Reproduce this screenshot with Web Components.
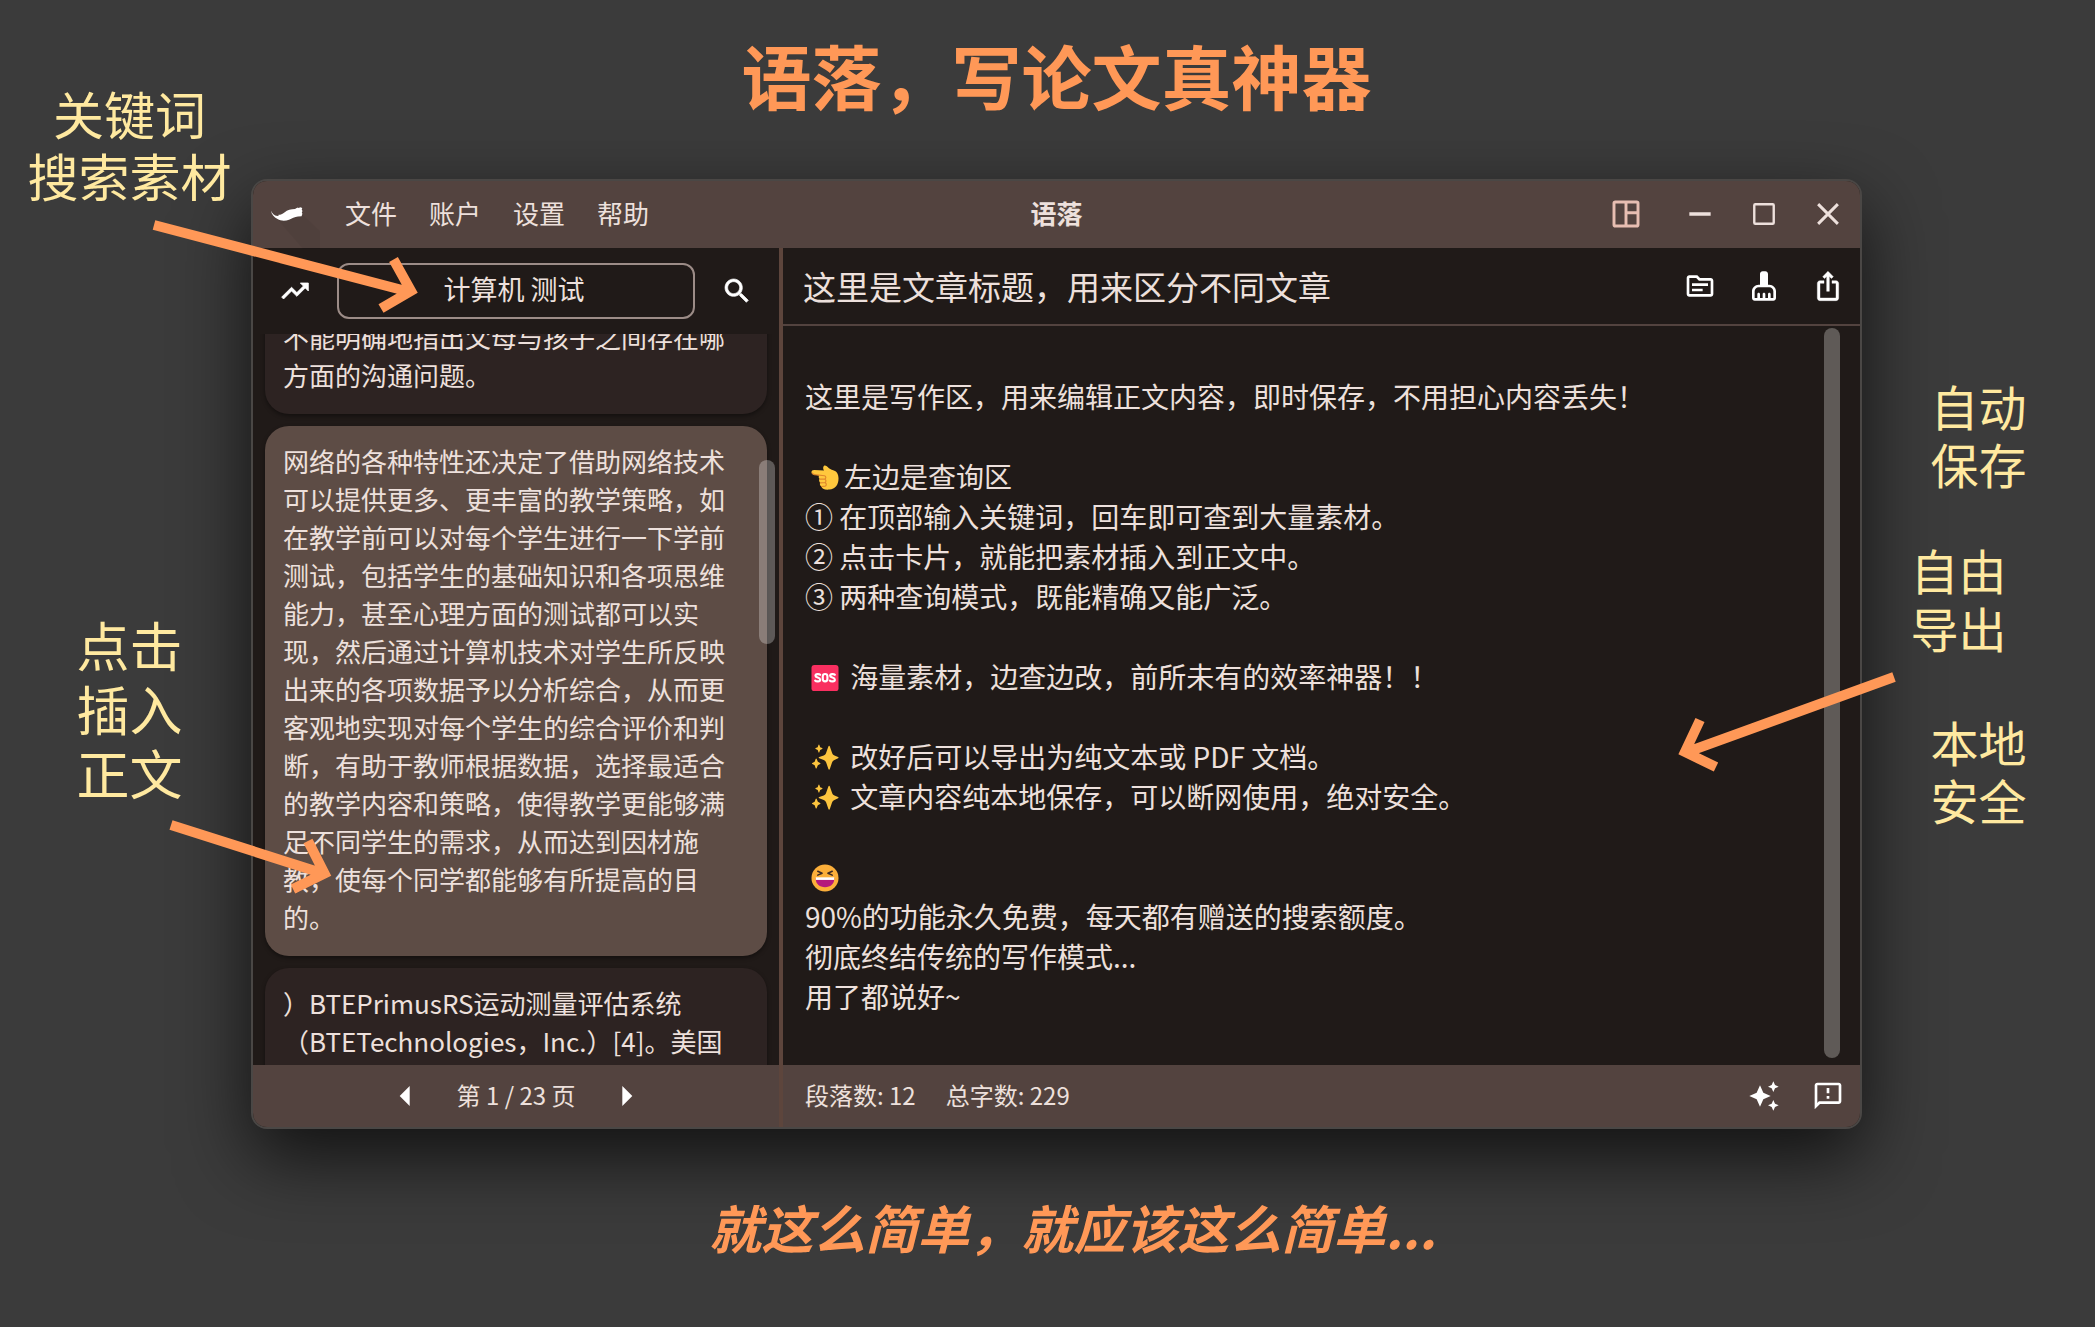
<!DOCTYPE html>
<html lang="zh-CN">
<head>
<meta charset="utf-8">
<title>语落，写论文真神器</title>
<style>
  html, body { margin: 0; }
  body {
    background: #3b3b3b;
    font-family: "Noto Sans CJK SC", sans-serif;
    --bar: #53433f;
    --surface: #201a18;
    --card: #2d2322;
    --card-active: #5d4c45;
    --divider: #5d453c;
    --text: #ede0dc;
    --accent: #ff9857;
    --note: #ffe9a0;
  }
</style>
</head>
<body>
<promo-poster></promo-poster>

<script>
const ICONS = {
  trend: '<path stroke="currentColor" stroke-width=".6" d="M16 6l2.29 2.29-4.88 4.88-4-4L2 16.59 3.41 18l6-6 4 4 6.3-6.29L22 12V6z"/>',
  search: '<path stroke="currentColor" stroke-width=".5" d="M15.5 14h-.79l-.28-.27C15.41 12.59 16 11.11 16 9.5 16 5.91 13.09 3 9.5 3S3 5.91 3 9.5 5.91 16 9.5 16c1.61 0 3.09-.59 4.23-1.57l.27.28v.79l5 4.99L20.49 19l-4.99-5zm-6 0C7.01 14 5 11.99 5 9.5S7.01 5 9.5 5 14 7.01 14 9.5 11.99 14 9.5 14z"/>',
  topic: '<path d="M20 6h-8l-2-2H4c-1.1 0-1.99.9-1.99 2L2 18c0 1.1.9 2 2 2h16c1.1 0 2-.9 2-2V8c0-1.1-.9-2-2-2zm0 12H4V6h5.17l2 2H20v10zm-2-6H6v-2h12v2zm-4 4H6v-2h8v2z"/>',
  clean: '<path d="M16 11h-1V3c0-1.1-.9-2-2-2h-2c-1.1 0-2 .9-2 2v8H8c-2.76 0-5 2.24-5 5v5c0 1.1.9 2 2 2h14c1.1 0 2-.9 2-2v-5c0-2.76-2.24-5-5-5zm3 10h-2v-3c0-.55-.45-1-1-1s-1 .45-1 1v3h-2v-3c0-.55-.45-1-1-1s-1 .45-1 1v3H9v-3c0-.55-.45-1-1-1s-1 .45-1 1v3H5v-5c0-1.65 1.35-3 3-3h8c1.65 0 3 1.35 3 3v5z"/>',
  share: '<path stroke="currentColor" stroke-width=".3" d="M16 5l-1.42 1.42-1.59-1.59V16h-1.98V4.83L9.42 6.42 8 5l4-4 4 4zm4 5v11c0 1.1-.9 2-2 2H6c-1.11 0-2-.9-2-2V10c0-1.11.89-2 2-2h3v2H6v11h12V10h-3V8h3c1.1 0 2 .89 2 2z"/>',
  sparkle: '<path d="M19 9l1.25-2.75L23 5l-2.75-1.25L19 1l-1.25 2.75L15 5l2.75 1.25L19 9zm-7.5.5L9 4 6.5 9.5 1 12l5.5 2.5L9 20l2.5-5.5L17 12l-5.5-2.5zM19 15l-1.25 2.75L15 19l2.75 1.25L19 23l1.25-2.75L23 19l-2.75-1.25L19 15z"/>',
  feedback: '<path d="M20 2H4c-1.1 0-1.99.9-1.99 2L2 22l4-4h14c1.1 0 2-.9 2-2V4c0-1.1-.9-2-2-2zm0 14H5.17L4 17.17V4h16v12zM11 12h2v2h-2zM11 6h2v4h-2z"/>',
  prev: '<path d="M15.5 4.5v15L8 12z"/>',
  next: '<path d="M8.5 4.5v15L16 12z"/>',
  layout: '<path fill="none" stroke="currentColor" stroke-width="2.2" d="M4 3h16a1 1 0 0 1 1 1v16a1 1 0 0 1-1 1H4a1 1 0 0 1-1-1V4a1 1 0 0 1 1-1zM12 3v18M12 11h9"/>',
  min: '<path d="M4 10.700h16v2.600H4z"/>',
  max: '<rect x="4.700" y="4.700" width="14.600" height="14.600" rx=".8" fill="none" stroke="currentColor" stroke-width="1.800"/>',
  close: '<path fill="none" stroke="currentColor" stroke-width="2.200" d="M4.600 4.600l14.800 14.800M19.400 4.600L4.600 19.400"/>'
};

const EMOJI = {
  point: '<path fill="#ffc83d" d="M0 8.500C0 6.800 1.200 6 3 6.100l10 .6c-1-1.500-1.300-3.500-.2-4.700 1.200-1.200 2.800-.2 4 1.200 1.700 2 3.500 2.700 5.700 3.200 3.600.9 5.500 4 5.500 8.600 0 6.500-3.400 11-9.500 11.500-5 .4-8-.8-8.200-3.200-1.600-.8-2-2.600-1.300-3.900-1.200-1-1.500-2.700-.6-4-.9-.9-1.200-2.300-.6-3.600L2.600 11C1 10.700 0 9.800 0 8.500z"/><path fill="none" stroke="#e0872c" stroke-width="1.200" stroke-linecap="round" d="M.700 9.400c.5 1 1.200 1.300 2.400 1.600l10.400 1.200c1.800.5 1.800 3 0 3.300l-4.600.2M9.200 19.500l4.600-.3c1.500-.4 1.500-2.600.2-3.500M10.600 23.300l3.600-.4c1.400-.3 1.500-2.500.2-3.500"/>',
  sos: '<rect y="1" width="28" height="27" rx="3" fill="#f92f60"/><path fill="none" stroke="#fff" stroke-width="2.200" stroke-linecap="round" d="M9 11.200c-.9-1-4.900-1.300-4.900 1 0 2.300 4.900 1.500 4.900 4 0 2.400-4.200 2.200-5.200.9M24.200 11.200c-.9-1-4.900-1.300-4.900 1 0 2.300 4.900 1.500 4.900 4 0 2.400-4.200 2.200-5.200.9"/><rect x="11.700" y="10.300" width="4.800" height="7.700" rx="2.400" fill="none" stroke="#fff" stroke-width="2.200"/>',
  stars: '<path fill="#fcc43e" d="M17.500 2.500c.5-1 1.100-1 1.500 0l2.300 6.600c.5 1.400 1.200 2.200 2.500 2.700l3.700 1.700c.7.300.7 1 0 1.300l-3.700 1.700c-1.300.5-2 1.300-2.500 2.700L19 25.800c-.4 1-1 1-1.500 0l-2.300-6.600c-.5-1.400-1.200-2.200-2.500-2.700L8 14.800c-.7-.3-.7-1 0-1.300l4.700-1.700c1.300-.5 2-1.300 2.500-2.700zM7.200 1c.3-.8.8-.8 1 0l.8 2.300 2 .9c.6.300.6.700 0 1L9 6.100l-.8 2.300c-.2.800-.7.800-1 0l-.8-2.300-2-.9c-.6-.3-.6-.7 0-1l2-.9zM4.300 15.500c.3-.8.800-.8 1.100 0l1.200 3 2.300 1.200c.6.300.6.700 0 1l-2.300 1.200-1.200 3c-.3.800-.8.800-1.100 0l-1-3L.900 20.700c-.6-.3-.6-.7 0-1l2.400-1.200z"/>',
  laugh: '<circle cx="14" cy="14.500" r="14" fill="#fcaf3a"/><path fill="#b4197c" d="M4.500 14.500h19v1.300c0 4.800-4 8.200-9.500 8.200s-9.500-3.400-9.500-8.200z"/><path fill="#fff" d="M4.500 13.800h19v2.700h-19z"/><path fill="none" stroke="#3d2a24" stroke-width="1.600" stroke-linecap="round" stroke-linejoin="round" d="M6.500 7.500l4.500 2-4.500 2M21.500 7.500l-4.500 2 4.500 2"/>'
};

function define(name, html, setup) {
  const tpl = document.createElement('template');
  tpl.innerHTML = html;
  customElements.define(name, class extends HTMLElement {
    constructor() {
      super();
      this.attachShadow({ mode: 'open' }).append(tpl.content.cloneNode(true));
    }
    connectedCallback() { if (setup) setup(this, this.shadowRoot); }
  });
}

define('icon-button', `
  <style>
    :host { display: flex; flex: none; width: 64px; color: #fff; }
    button { all: unset; flex: 1; display: flex; justify-content: center; align-items: center; cursor: pointer; }
    svg { width: 32px; height: 32px; fill: currentColor; display: block; }
  </style>
  <button type="button"><svg viewBox="0 0 24 24" aria-hidden="true"></svg></button>`,
  (host, root) => {
    root.querySelector('svg').innerHTML = ICONS[host.getAttribute('icon')];
    root.querySelector('button').setAttribute('aria-label', host.getAttribute('label'));
  });

define('emoji-glyph', `
  <style>
    :host { display: inline-block; width: 28px; height: 28px; margin: 0 5px 0 6px; vertical-align: -4px; }
    svg { display: block; width: 28px; height: 28px; }
  </style>
  <svg viewBox="0 0 28 29" aria-hidden="true"></svg>`,
  (host, root) => { root.querySelector('svg').innerHTML = EMOJI[host.getAttribute('kind')]; });

define('side-note', `
  <style>
    :host { display: block; color: var(--note); font-size: 48px; line-height: 58px; text-align: center; white-space: nowrap; }
    :host([size="m"]) { font-size: 51px; line-height: 62px; }
    :host([size="l"]) { font-size: 53px; line-height: 64px; }
    p { margin: 0; }
  </style>
  <p><slot></slot></p>`);

define('note-arrow', `
  <style>
    :host { display: block; position: absolute; pointer-events: none; color: var(--accent); }
    svg { display: block; overflow: visible; fill: none; stroke: currentColor; stroke-width: 10; }
  </style>
  <svg aria-hidden="true"><path></path></svg>`,
  (host, root) => {
    const svg = root.querySelector('svg');
    svg.setAttribute('width', host.getAttribute('w'));
    svg.setAttribute('height', host.getAttribute('h'));
    root.querySelector('path').setAttribute('d', host.getAttribute('d'));
  });

define('title-bar', `
  <style>
    :host { display: grid; grid-template-columns: 1fr auto 1fr; align-items: stretch; height: 67px; background: var(--bar); color: var(--text); font-size: 26px; line-height: 38px; }
    .left, .right { display: flex; align-items: center; }
    .right { justify-content: flex-end; }
    .logo { width: 32px; height: 18px; margin: 0 42px 0 18px; overflow: visible; }
    nav { display: flex; gap: 32px; padding-bottom: 4px; }
    nav button { all: unset; cursor: pointer; }
    h1 { margin: 0; align-self: center; padding-bottom: 4px; font-size: 26px; line-height: 38px; font-weight: 700; }
    icon-button { align-self: stretch; padding-bottom: 2px; color: var(--text); }
    icon-button[icon="layout"] { color: #e7beb2; margin-right: 10px; }
  </style>
  <div class="left">
    <svg class="logo" viewBox="0 0 32 18" aria-hidden="true">
      <path fill="#000" opacity=".04" d="M6 13L31 8l18 17v18H32z"/>
      <path fill="#fff" d="M0 4.500c1 3 3.200 5.200 6.500 5.400l1.500-.6-.6-.5c2.400 0 4-1 6-2.400C16.500 4 20 3 24 3l2.500-1.500L27 2l3-.7 1.300 1.200-.6 1 .8 1.500-.7 1.500.6 1.200-.8 2.600-3.600.2c-3.500.3-6 2-9 3.200-3.500 1.400-8 1.500-11.500-.6C3 11.200.4 8.500 0 4.500z"/>
    </svg>
    <nav aria-label="菜单">
      <button type="button">文件</button><button type="button">账户</button><button type="button">设置</button><button type="button">帮助</button>
    </nav>
  </div>
  <h1>语落</h1>
  <div class="right">
    <icon-button icon="layout" label="布局"></icon-button>
    <icon-button icon="min" label="最小化"></icon-button>
    <icon-button icon="max" label="最大化"></icon-button>
    <icon-button icon="close" label="关闭"></icon-button>
  </div>`);

define('material-card', `
  <style>
    :host { display: block; flex: none; box-sizing: border-box; padding: 16px 18px 20px; border-radius: 24px; background: var(--card); color: var(--text); font-size: 26px; line-height: 38px; box-shadow: 0 2px 4px rgba(0,0,0,.4); }
    :host([active]) { background: var(--card-active); }
    p { margin: 0; }
  </style>
  <p><slot></slot></p>`);

define('search-pane', `
  <style>
    :host { display: flex; flex-direction: column; border-right: 4px solid var(--divider); box-sizing: border-box; min-width: 0; }
    form { display: flex; align-items: center; height: 86px; }
    form icon-button { width: 84px; align-self: stretch; }
    input { flex: 1; min-width: 0; height: 56px; box-sizing: border-box; border: 2px solid #9c8c87; border-radius: 12px; padding: 0 6px 5px 2px; background: transparent; color: var(--text); font: 27px/38px "Noto Sans CJK SC", sans-serif; text-align: center; outline: none; }
    .results { flex: 1; contain: size; position: relative; overflow: hidden; display: flex; flex-direction: column; gap: 12px; padding: 0 12px; }
    .scrolled { margin-top: -32px; }
    .tall { min-height: 160px; }
    .thumb { position: absolute; right: 4px; top: 126px; width: 16px; height: 184px; border-radius: 8px; background: rgba(255,255,255,.28); }
    footer { display: flex; justify-content: center; gap: 20px; height: 62px; background: var(--bar); color: var(--text); font-size: 24px; line-height: 60px; }
  </style>
  <form role="search">
    <icon-button icon="trend" label="查询模式"></icon-button>
    <input type="text" value="计算机 测试" aria-label="关键词">
    <icon-button icon="search" label="搜索"></icon-button>
  </form>
  <div class="results">
    <material-card class="scrolled">不能明确地指出父母与孩子之间存在哪方面的沟通问题。</material-card>
    <material-card active>网络的各种特性还决定了借助网络技术可以提供更多、更丰富的教学策略，如在教学前可以对每个学生进行一下学前测试，包括学生的基础知识和各项思维能力，甚至心理方面的测试都可以实现，然后通过计算机技术对学生所反映出来的各项数据予以分析综合，从而更客观地实现对每个学生的综合评价和判断，有助于教师根据数据，选择最适合的教学内容和策略，使得教学更能够满足不同学生的需求，从而达到因材施教，使每个同学都能够有所提高的目的。</material-card>
    <material-card class="tall">）BTEPrimusRS运动测量评估系统（BTETechnologies，Inc.）[4]。美国</material-card>
    <div class="thumb"></div>
  </div>
  <footer>
    <icon-button icon="prev" label="上一页"></icon-button>
    <span>第 1 / 23 页</span>
    <icon-button icon="next" label="下一页"></icon-button>
  </footer>`);

define('editor-pane', `
  <style>
    :host { display: flex; flex-direction: column; min-width: 0; color: var(--text); }
    header { display: flex; align-items: stretch; height: 78px; box-sizing: border-box; border-bottom: 2px solid var(--bar); }
    input { flex: 1; min-width: 0; border: 0; padding: 0 0 0 20px; background: transparent; color: inherit; font: 33px/48px "Noto Sans CJK SC", sans-serif; outline: none; }
    .page { flex: 1; display: flex; padding: 2px 20px 7px 22px; }
    .text { flex: 1; min-width: 0; padding: 8px 0 40px; font-size: 28px; line-height: 40px; outline: none; }
    .text p { margin: 0; min-height: 40px; }
    .thumb { flex: none; width: 16px; border-radius: 8px; background: #5f5a57; }
    footer { display: flex; align-items: stretch; height: 62px; background: var(--bar); padding-left: 22px; font-size: 24px; line-height: 60px; }
    footer span { margin-right: 30px; }
    .fill { flex: 1; }
  </style>
  <header>
    <input type="text" value="这里是文章标题，用来区分不同文章" aria-label="文章标题">
    <icon-button icon="topic" label="文章列表"></icon-button>
    <icon-button icon="clean" label="清理"></icon-button>
    <icon-button icon="share" label="导出"></icon-button>
  </header>
  <div class="page">
    <div class="text" contenteditable="true" role="textbox" aria-multiline="true" aria-label="正文" spellcheck="false">
      <p></p>
      <p>这里是写作区，用来编辑正文内容，即时保存，不用担心内容丢失！</p>
      <p></p>
      <p><emoji-glyph kind="point"></emoji-glyph>左边是查询区</p>
      <p>① 在顶部输入关键词，回车即可查到大量素材。</p>
      <p>② 点击卡片，就能把素材插入到正文中。</p>
      <p>③ 两种查询模式，既能精确又能广泛。</p>
      <p></p>
      <p><emoji-glyph kind="sos"></emoji-glyph> 海量素材，边查边改，前所未有的效率神器！！</p>
      <p></p>
      <p><emoji-glyph kind="stars"></emoji-glyph> 改好后可以导出为纯文本或 PDF 文档。</p>
      <p><emoji-glyph kind="stars"></emoji-glyph> 文章内容纯本地保存，可以断网使用，绝对安全。</p>
      <p></p>
      <p><emoji-glyph kind="laugh"></emoji-glyph></p>
      <p>90%的功能永久免费，每天都有赠送的搜索额度。</p>
      <p>彻底终结传统的写作模式...</p>
      <p>用了都说好~</p>
    </div>
    <div class="thumb"></div>
  </div>
  <footer>
    <span>段落数: 12</span><span>总字数: 229</span><div class="fill"></div>
    <icon-button icon="sparkle" label="润色"></icon-button>
    <icon-button icon="feedback" label="反馈"></icon-button>
  </footer>`);

define('app-window', `
  <style>
    :host { display: block; box-sizing: border-box; border: 2px solid #4a4745; border-radius: 16px; overflow: hidden; background: var(--surface); box-shadow: 0 28px 72px rgba(0,0,0,.7); }
    .panes { display: grid; grid-template-columns: 530px minmax(0, 1fr); min-height: 879px; }
  </style>
  <title-bar></title-bar>
  <div class="panes"><search-pane></search-pane><editor-pane></editor-pane></div>`);

define('promo-poster', `
  <style>
    :host { position: relative; display: grid; grid-template-columns: 251px minmax(0, 1fr) 233px; grid-template-rows: auto auto 1fr; min-height: 100vh; overflow: hidden; }
    .notes { grid-row: 1 / 4; display: flex; flex-direction: column; align-items: center; position: relative; z-index: 1; }
    .notes.left { grid-column: 1; padding: 82px 0 0 8px; gap: 406px; }
    .notes.right { grid-column: 3; padding-top: 376px; gap: 48px; }
    .inset { padding: 0 40px 8px 0; }
    h2, .tagline { grid-column: 2; margin: 0; color: var(--accent); font-weight: 700; text-align: center; line-height: 100px; white-space: nowrap; }
    h2 { grid-row: 1; font-size: 70px; padding: 25px 0 54px; }
    .tagline { grid-row: 3; font-size: 52px; font-style: italic; padding: 48px 0 50px 32px; position: relative; }
    app-window { grid-column: 2; grid-row: 2; }
    note-arrow { z-index: 2; }
    .a1 { left: 154px; top: 225px; }
    .a2 { left: 171px; top: 825px; }
    .a3 { right: 201px; top: 677px; }
  </style>
  <h2>语落，写论文真神器</h2>
  <div class="notes left">
    <side-note size="m">关键词<br>搜索素材</side-note>
    <side-note size="l">点击<br>插入<br>正文</side-note>
  </div>
  <app-window></app-window>
  <div class="notes right">
    <side-note>自动<br>保存</side-note>
    <side-note class="inset">自由<br>导出</side-note>
    <side-note>本地<br>安全</side-note>
  </div>
  <p class="tagline">就这么简单，就应该这么简单...</p>
  <note-arrow class="a1" w="257" h="84" d="M0 0L252 66M239.500 34.500L257 66L227 83.500"></note-arrow>
  <note-arrow class="a2" w="154" h="64" d="M0 0L149 47.500M137 16L153.500 48.500L122 64"></note-arrow>
  <note-arrow class="a3" w="209" h="90" d="M209 0L5 74M15 43L0 75L31 90"></note-arrow>`);
</script>
</body>
</html>
